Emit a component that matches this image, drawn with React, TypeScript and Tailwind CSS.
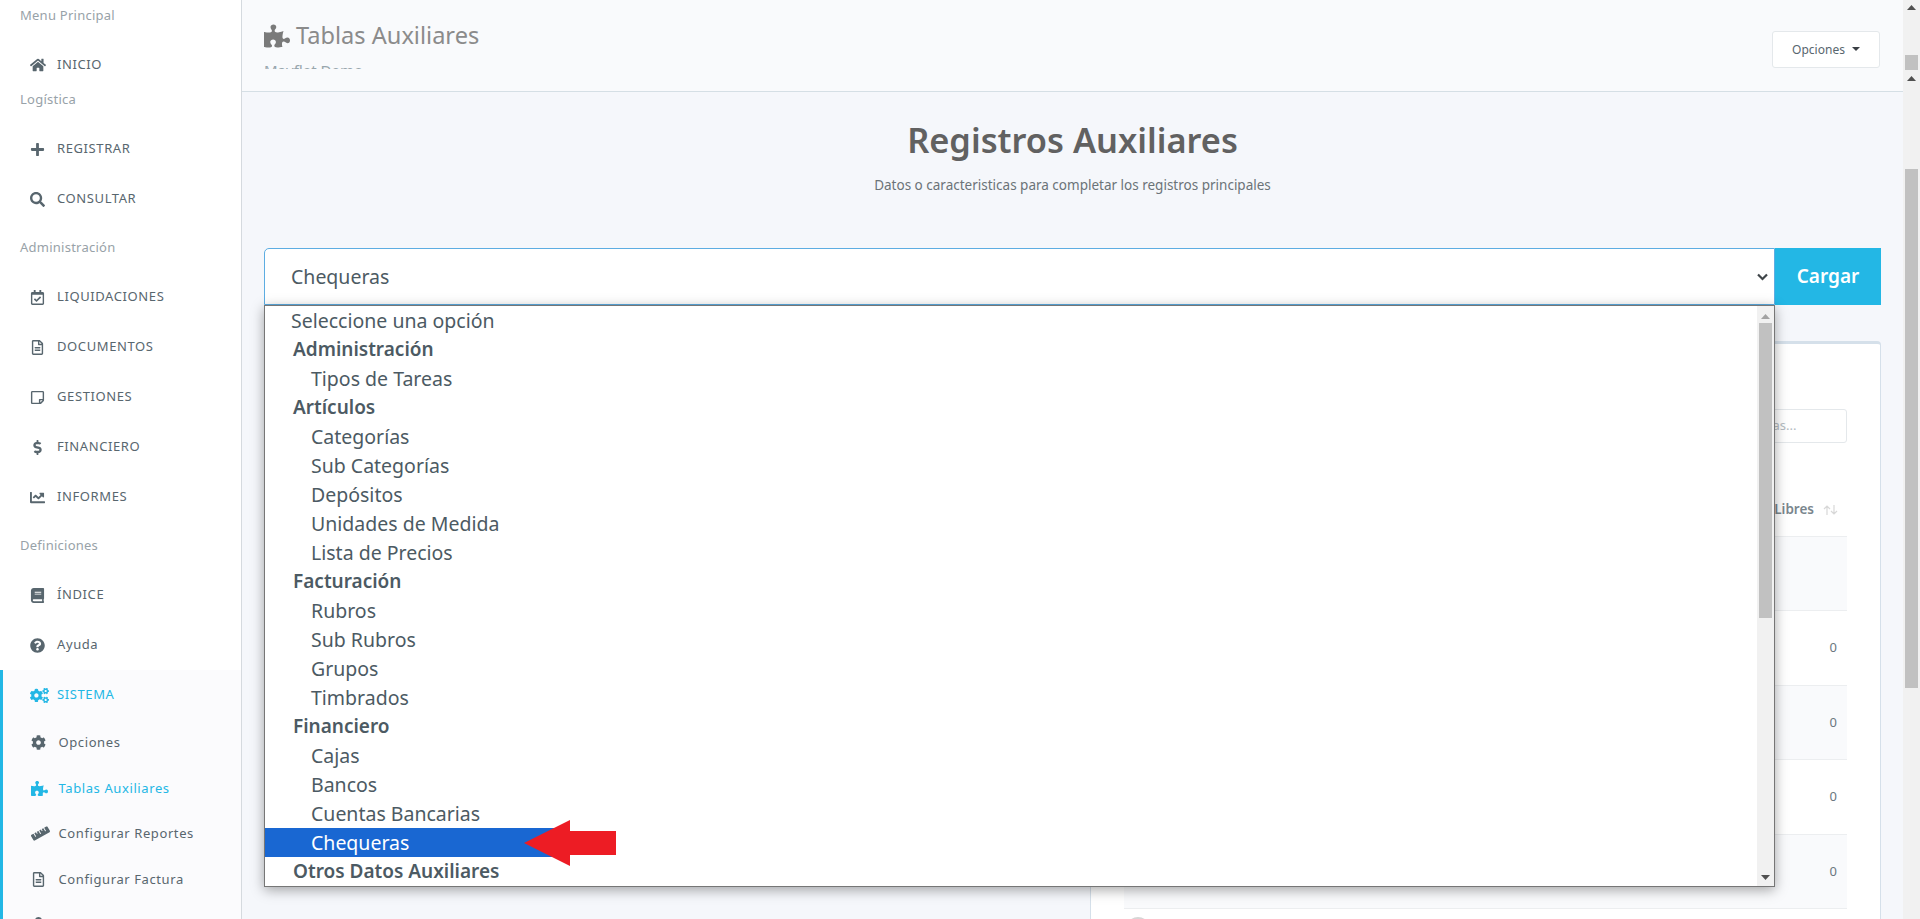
import type { ReactNode } from 'react'
import {
  FaBook,
  FaChartLine,
  FaCog,
  FaCogs,
  FaDollarSign,
  FaHome,
  FaPlus,
  FaPuzzlePiece,
  FaQuestionCircle,
  FaRegCalendarCheck,
  FaRegFileAlt,
  FaRegStickyNote,
  FaRuler,
  FaSearch,
  FaUser,
} from 'react-icons/fa'

const SectionLabel = ({ text, first }: { text: string; first?: boolean }) => (
  <div
    className={`pl-5 pb-4 text-[13px] leading-[18px] tracking-[0.25px] text-[#98a2a8] ${first ? 'pt-[6px]' : ''}`}
  >
    {text}
  </div>
)

const NavItem = ({
  icon,
  label,
  active,
}: {
  icon: ReactNode
  label: string
  active?: boolean
}) => (
  <div
    className={`flex h-[50px] items-center text-[13px] tracking-[0.6px] ${active ? 'pl-[27px] text-[#23b7e5]' : 'pl-[30px] text-[#58666e]'}`}
  >
    <span className="flex w-[27px] items-center text-[15px]">{icon}</span>
    {label}
  </div>
)

const SubItem = ({
  icon,
  label,
  active,
}: {
  icon: ReactNode
  label: string
  active?: boolean
}) => (
  <div
    className={`flex h-[45.5px] items-center pl-[28px] text-[13px] tracking-[0.6px] ${active ? 'text-[#23b7e5]' : 'text-[#58666e]'}`}
  >
    <span className="flex w-[27.5px] items-center text-[15px]">{icon}</span>
    {label}
  </div>
)

const Sidebar = () => (
  <aside className="h-full w-[242px] shrink-0 border-r border-[#d5dadf] bg-white">
    <SectionLabel text="Menu Principal" first />
    <NavItem icon={<FaHome className="text-[16px]" />} label="INICIO" />
    <SectionLabel text="Logística" />
    <NavItem icon={<FaPlus />} label="REGISTRAR" />
    <NavItem icon={<FaSearch />} label="CONSULTAR" />
    <div className="pt-[14px]">
      <SectionLabel text="Administración" />
    </div>
    <NavItem icon={<FaRegCalendarCheck />} label="LIQUIDACIONES" />
    <NavItem icon={<FaRegFileAlt />} label="DOCUMENTOS" />
    <NavItem icon={<FaRegStickyNote />} label="GESTIONES" />
    <NavItem icon={<FaDollarSign />} label="FINANCIERO" />
    <NavItem icon={<FaChartLine />} label="INFORMES" />
    <div className="pt-[14px]">
      <SectionLabel text="Definiciones" />
    </div>
    <NavItem icon={<FaBook />} label="ÍNDICE" />
    <NavItem icon={<FaQuestionCircle />} label="Ayuda" />
    <div className="border-l-[3px] border-[#23b7e5] bg-[#fbfbfd] pb-4">
      <NavItem icon={<FaCogs className="text-[19px]" />} label="SISTEMA" active />
      <SubItem icon={<FaCog />} label="Opciones" />
      <SubItem icon={<FaPuzzlePiece className="text-[17px]" />} label="Tablas Auxiliares" active />
      <SubItem icon={<FaRuler className="text-[19px]" />} label="Configurar Reportes" />
      <SubItem icon={<FaRegFileAlt />} label="Configurar Factura" />
      <SubItem icon={<FaUser />} label="Usuarios" />
    </div>
  </aside>
)

const Header = () => (
  <header className="flex h-[92px] shrink-0 items-start justify-between border-b border-[#d5dfe5] bg-[#f9fafc] pl-[22px] pr-[23px]">
    <div className="h-[69px] overflow-hidden pt-[18px]">
      <div className="flex h-[36px] items-center gap-[6px] text-[23.6px] text-[#8b8b8b]">
        <FaPuzzlePiece className="text-[26px] text-[#7a7a7a]" />
        Tablas Auxiliares
      </div>
      <div className="pt-[6px] text-[15px] leading-5 text-[#98a6ad]">Mayflet Demo</div>
    </div>
    <button className="mt-[31px] flex h-[37px] w-[108px] items-center justify-center gap-[7px] rounded-[3px] border border-[#e4e8eb] bg-white text-[12px] text-[#58666e]">
      Opciones
      <span className="mb-[2px] h-0 w-0 border-x-[4px] border-t-[4px] border-x-transparent border-t-[#3a3f44]" />
    </button>
  </header>
)

const tableRows = ['', '0', '0', '0', '0']

const TableCard = () => (
  <div className="mt-[36px] ml-auto w-[791px] rounded-t-[4px] border-x border-t-[3px] border-[#d5e0ea] bg-white px-[33px] pt-[65px]">
    <div className="flex justify-end">
      <div className="flex h-[34px] w-[210px] items-center rounded-[3px] border border-[#e4e8eb] px-3 text-[13px] text-[#b4bcc2]">
        Buscar en 12 entradas...
      </div>
    </div>
    <div className="mt-[39px] flex h-[55px] items-start justify-end gap-[9px] border-b border-[#eceef0] pr-[9px] pt-[18px] text-[13.5px] font-semibold leading-[18px] text-[#7a868d]">
      Libres
      <svg className="mt-[5px]" width="15" height="10" viewBox="0 0 15 10" fill="none" stroke="#d8d8d8" strokeWidth="1.2">
        <path d="M4 10V1M1 4l3-3 3 3M11 0v9M8 6l3 3 3-3" />
      </svg>
    </div>
    {tableRows.map((zero, i) => (
      <div
        key={i}
        className={`flex h-[74.4px] items-center justify-between border-b border-[#eceef0] pl-[37px] pr-[10px] text-[13px] text-[#6b7780] ${i % 2 === 0 ? 'bg-[#f9fafc]' : 'bg-white'}`}
      >
        <span>{i === 4 ? '12' : ''}</span>
        <span>{zero}</span>
      </div>
    ))}
    <div className="mt-[8px] ml-[2px] h-[24px] w-[24px] rounded-full bg-[#d6d6d6]" />
  </div>
)

type Option = { label: string; kind: 'plain' | 'group' | 'item'; selected?: boolean }

const options: Option[] = [
  { label: 'Seleccione una opción', kind: 'plain' },
  { label: 'Administración', kind: 'group' },
  { label: 'Tipos de Tareas', kind: 'item' },
  { label: 'Artículos', kind: 'group' },
  { label: 'Categorías', kind: 'item' },
  { label: 'Sub Categorías', kind: 'item' },
  { label: 'Depósitos', kind: 'item' },
  { label: 'Unidades de Medida', kind: 'item' },
  { label: 'Lista de Precios', kind: 'item' },
  { label: 'Facturación', kind: 'group' },
  { label: 'Rubros', kind: 'item' },
  { label: 'Sub Rubros', kind: 'item' },
  { label: 'Grupos', kind: 'item' },
  { label: 'Timbrados', kind: 'item' },
  { label: 'Financiero', kind: 'group' },
  { label: 'Cajas', kind: 'item' },
  { label: 'Bancos', kind: 'item' },
  { label: 'Cuentas Bancarias', kind: 'item' },
  { label: 'Chequeras', kind: 'item', selected: true },
  { label: 'Otros Datos Auxiliares', kind: 'group' },
]

const ScrollArrow = ({ color, down }: { color: string; down?: boolean }) => (
  <svg width="9" height="5" viewBox="0 0 9 5" className={down ? 'rotate-180' : ''}>
    <path d="M0 5L4.5 0 9 5z" fill={color} />
  </svg>
)

const OptionRow = ({ option }: { option: Option }) => {
  const indent =
    option.kind === 'plain'
      ? 'pl-[26px] text-[19.5px]'
      : option.kind === 'group'
        ? 'pl-[28px] text-[19px] font-semibold'
        : 'pl-[46px] text-[19.5px]'
  return (
    <div
      className={`flex h-[29px] items-center ${indent} ${option.selected ? 'w-[290px] bg-[#1967d2] text-white' : 'text-[#4c5a63]'}`}
    >
      {option.label}
    </div>
  )
}

const SelectDropdown = () => (
  <div className="absolute left-0 top-[57px] z-10 flex h-[582px] w-[1511px] border border-[#767676] bg-white shadow-[0_3px_12px_rgba(0,0,0,0.35)]">
    <div className="flex-1">
      {options.map((option) => (
        <OptionRow key={option.label} option={option} />
      ))}
    </div>
    <div className="flex w-[17px] flex-col items-center bg-[#f1f1f1] pt-[8px]">
      <ScrollArrow color="#a3a3a3" />
      <div className="mt-[4px] h-[295px] w-[13px] bg-[#c1c1c1]" />
      <div className="mt-auto mb-[6px]">
        <ScrollArrow color="#505050" down />
      </div>
    </div>
    <svg className="absolute left-[259px] top-[514px]" width="92" height="46" viewBox="0 0 92 46">
      <path d="M0 23L46 0V11H92V35H46V46z" fill="#ed1c24" />
    </svg>
  </div>
)

const SelectRow = () => (
  <div className="relative mt-[53px] flex h-[57px]">
    <div className="flex flex-1 items-center justify-between rounded-tl-[5px] border border-[#5dade2] bg-white pl-[26px] pr-[6px] text-[19.5px] text-[#4c5a63]">
      Chequeras
      <svg width="11" height="8" viewBox="0 0 11 8" fill="none" stroke="#3f4549" strokeWidth="2.2">
        <path d="M1 1.5l4.5 4.5L10 1.5" />
      </svg>
    </div>
    <button className="w-[106px] bg-[#23b7e5] text-[19px] font-semibold text-white">Cargar</button>
    <SelectDropdown />
  </div>
)

const PageScrollbar = () => (
  <div className="flex h-full w-[17px] shrink-0 flex-col items-center bg-[#f1f1f1] pt-[5px]">
    <ScrollArrow color="#505050" />
    <div className="mt-[45px] h-[15px] w-[13px] bg-[#c1c1c1]" />
    <div className="mt-[6px]">
      <ScrollArrow color="#505050" />
    </div>
    <div className="mt-[88px] h-[519px] w-[13px] bg-[#c1c1c1]" />
  </div>
)

const App = () => (
  <div className="flex h-[919px] w-full overflow-hidden bg-[#f5f7fb] font-['Noto_Sans',sans-serif]">
    <Sidebar />
    <main className="flex h-full min-w-0 flex-1 flex-col overflow-hidden">
      <Header />
      <section className="pl-[22px] pr-[22px]">
        <div className="pt-[24px] text-center">
          <h1 className="text-[34.4px] font-semibold leading-[48px] text-[#616161]">Registros Auxiliares</h1>
          <p className="mt-[11px] text-[13.5px] leading-[20px] text-[#6b7378]">
            Datos o caracteristicas para completar los registros principales
          </p>
        </div>
        <SelectRow />
        <TableCard />
      </section>
    </main>
    <PageScrollbar />
  </div>
)

export default App
